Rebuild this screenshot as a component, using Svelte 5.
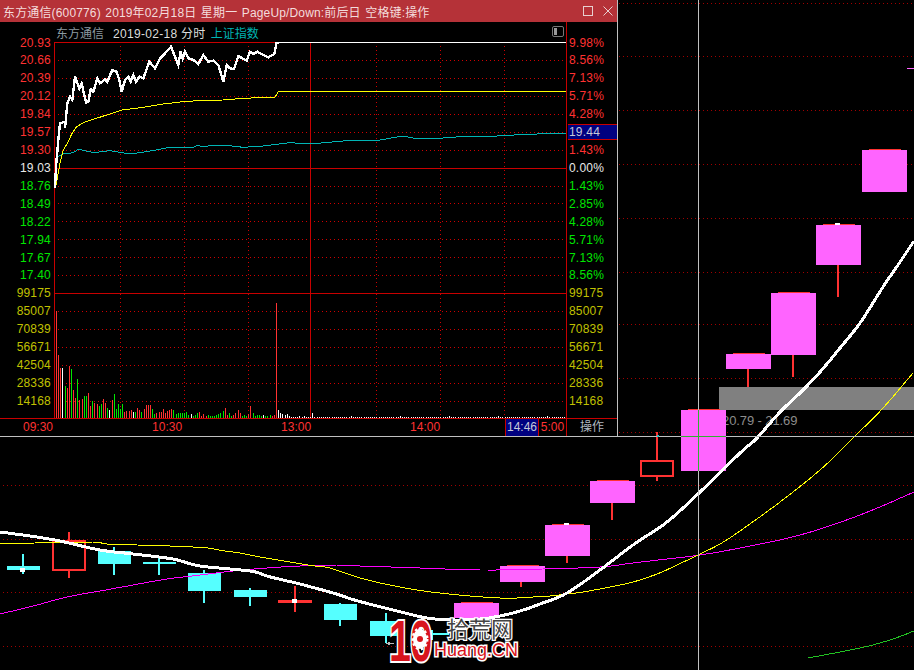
<script>
	// main K-line chart behind the window
	const bgGrid = [3, 56, 110, 164, 218, 272, 324, 378, 432, 485, 539, 592, 646];

	const candles = [
		{ k: "cyan", x: 7, y: 566, h: 4, cx: 22, top: 554, bot: 574, dot: 568 },
		{ k: "hollow", x: 52, y: 540, h: 31, cx: 68, top: 532, bot: 578 },
		{ k: "cyan", x: 98, y: 551, h: 13, cx: 113, top: 547, bot: 575 },
		{ k: "cyan", x: 143, y: 562, h: 2, cx: 158, top: 556, bot: 575 },
		{ k: "cyan", x: 188, y: 573, h: 18, cx: 203, top: 570, bot: 603 },
		{ k: "cyan", x: 234, y: 590, h: 7, cx: 249, top: 588, bot: 606 },
		{ k: "red", x: 278, y: 600, h: 3, cx: 294, top: 586, bot: 612, dot: 599 },
		{ k: "cyan", x: 324, y: 604, h: 16, cx: 339, top: 603, bot: 626 },
		{ k: "cyan", x: 370, y: 621, h: 15, cx: 385, top: 613, bot: 643 },
		{ k: "cyan", x: 416, y: 633, h: 2, cx: 431, top: 630, bot: 640 },
		{ k: "pink", x: 454, y: 603, h: 15, cx: 476, top: 603, bot: 618 },
		{ k: "pink", x: 500, y: 566, h: 16, cx: 520, top: 566, bot: 587 },
		{ k: "pink", x: 545, y: 525, h: 31, cx: 566, top: 525, bot: 563, dot: 523 },
		{ k: "pink", x: 590, y: 481, h: 22, cx: 611, top: 481, bot: 520 },
		{ k: "hollow", x: 640, y: 460, h: 17, cx: 656, top: 432, bot: 481 },
		{ k: "pink", x: 681, y: 410, h: 61, cx: 703, top: 410, bot: 471 },
		{ k: "pink", x: 726, y: 354, h: 15, cx: 747, top: 354, bot: 387 },
		{ k: "pink", x: 771, y: 293, h: 62, cx: 792, top: 293, bot: 377 },
		{ k: "pink", x: 816, y: 225, h: 40, cx: 837, top: 225, bot: 297, dot: 223 },
		{ k: "pink", x: 862, y: 150, h: 42, cx: 884, top: 150, bot: 192 },
	];

	// Catmull-Rom through the read-off points, the averages are smooth curves
	const smooth = (str) => {
		const p = str.split(" ").map((s) => s.split(",").map(Number));
		const out = [];
		for (let i = 0; i < p.length - 1; i++) {
			const a = p[Math.max(i - 1, 0)];
			const b = p[i];
			const c = p[i + 1];
			const d = p[Math.min(i + 2, p.length - 1)];
			for (let t = 0; t < 1; t += 0.125) {
				const f = (k) =>
					0.5 *
					(2 * b[k] +
						(c[k] - a[k]) * t +
						(2 * a[k] - 5 * b[k] + 4 * c[k] - d[k]) * t * t +
						(3 * b[k] - a[k] - 3 * c[k] + d[k]) * t * t * t);
				out.push(`${f(0).toFixed(1)},${f(1).toFixed(1)}`);
			}
		}
		out.push(p[p.length - 1].join(","));
		return out.join(" ");
	};

	const maWhite = smooth("0,532 30,536 60,541 100,550 133,554 173,559 200,566 250,571 267,576 283,580 300,584 333,593 358,601 393,610 427,618 455,620 480,619 500,616 520,611 540,604 567,593 600,570 633,545 667,522 700,492 740,453 757,438 780,412 800,393 820,372 840,348 860,323 883,287 900,262 914,241");
	const maYellow = smooth("0,544 35,543 92,542 107,544 137,545 170,546 193,547 208,548 225,551 240,553 260,557 290,562 315,566 330,568 360,578 390,585 417,590 440,593 470,596 500,598 517,598 533,597 550,596 567,594 583,592 610,587 633,582 657,574 677,565 700,554 720,544 740,531 780,502 820,470 853,438 883,408 913,373");
	const maPink = smooth("0,614 33,606 67,597 100,591 133,585 167,579 200,575 233,571 267,568 300,566 333,565 360,566 420,568 480,570 543,569 600,567 633,563 667,559 700,555 740,548 800,535 860,515 914,492");
	const maGreen = smooth("808,658 860,648 890,640 914,631");

	// intraday window
	const vSolid = 310;
	const vDots = [120, 184, 248, 376, 440, 504];
	const hDots = [60, 78, 96, 114, 132, 150, 186, 203, 221, 239, 257, 275, 311, 329, 347, 365, 383, 401];

	const priceRaw = [[75,475],[78,410],[85,330],[90,280],[105,275],[105,295],[112,220],[120,200],[127,210],[135,140],[148,175],[155,160],[168,218],[175,215],[182,178],[190,185],[202,145],[210,160],[225,148],[232,155],[247,120],[260,125],[268,150],[275,185],[285,150],[295,140],[302,155],[310,135],[318,155],[328,140],[340,145],[358,95],[375,115],[390,85],[405,70],[423,50],[445,105],[452,65],[458,85],[465,65],[475,85],[490,90],[505,102],[520,75],[535,95],[550,92],[565,105],[580,155],[590,105],[600,115],[612,117],[625,78],[650,92],[660,65],[672,72],[682,65],[700,75],[715,82],[733,72],[740,38],[750,36]];
	const avgRaw = [[78,465],[90,400],[100,360],[115,335],[125,312],[140,290],[160,278],[190,268],[230,255],[275,240],[340,232],[400,222],[460,215],[520,211],[580,210],[640,205],[735,201],[745,185],[780,184]];
	const idxRaw = [[78,382],[100,372],[130,368],[145,358],[165,362],[190,368],[240,362],[300,372],[350,365],[420,352],[490,352],[500,347],[520,349],[580,345],[640,352],[700,348],[780,338]];
	const toPts = (raw) => raw.map(([x, y]) => `${30 + x / 3},${30 + y / 3}`).join(" ");

	const pricePts = toPts(priceRaw) + " 566,42";
	const avgPts = toPts(avgRaw) + " 566,91";
	const idxPts = toPts(idxRaw) + " 310,144 343,141 377,140.5 403,136 413,138 443,138 470,136 497,136 523,134.5 566,133";

	const volTop = [["r",107],["r",63],["r",50],["w",50],["g",32],["r",30],["r",52],["g",49],["r",28],["r",20],["g",39],["r",18],["r",19],["g",22],["g",22],["r",25],["r",12],["g",17],["r",15],["r",14],["g",12],["g",14],["r",19],["r",15],["g",10],["w",8],["r",18],["g",24],["g",9],["g",14],["g",9],["g",14],["r",6],["r",7],["r",7],["r",8],["w",6],["g",6],["r",10],["r",8],["g",6],["r",9],["r",13],["r",13],["r",13],["g",9],["g",4],["r",5],["r",6],["r",6],["r",9],["r",5],["r",7],["r",8],["r",9],["g",8],["g",4],["g",5],["g",5],["g",5],["g",5],["g",6],["g",3],["w",4],["g",2],["g",3],["g",5],["r",6],["r",2],["r",4],["r",2],["g",3],["g",2],["g",2],["g",2],["g",3],["g",4],["g",5],["g",7],["r",10],["r",3],["g",5],["g",2],["r",3],["r",5],["r",8],["r",5],["g",2],["g",3],["g",2],["r",4],["r",12],["g",5],["g",2],["g",3],["g",3],["g",2],["w",3],["g",2],["g",2],["g",3],["r",2],["r",3],["r",115],["w",8],["w",5],["w",4],["w",3],["w",4],["w",2],["w",1],["w",1],["w",1],["w",1],["w",2],["w",1],["w",2],["w",1]];
	const step = (276 - 56) / 103;
	const bars = [];
	for (let i = 0; i < 240; i++) {
		const v = volTop[i] || ["w", i === 120 ? 5 : i % 23 === 0 ? 2 : 1];
		bars.push({ x: Math.round(56 + i * step), h: v[1], c: v[0] });
	}
	const barColor = { r: "#ff3232", g: "#00e600", w: "#ffffff" };

	const leftRows = [
		["20.93", "up"], ["20.66", "up"], ["20.39", "up"], ["20.12", "up"], ["19.84", "up"], ["19.57", "up"], ["19.30", "up"],
		["19.03", "flat"],
		["18.76", "down"], ["18.49", "down"], ["18.22", "down"], ["17.94", "down"], ["17.67", "down"], ["17.40", "down"],
		["99175", "vol"], ["85007", "vol"], ["70839", "vol"], ["56671", "vol"], ["42504", "vol"], ["28336", "vol"], ["14168", "vol"],
	];
	const rightRows = [
		["9.98%", "up"], ["8.56%", "up"], ["7.13%", "up"], ["5.71%", "up"], ["4.28%", "up"],
		["19.44", "cur"],
		["1.43%", "up"], ["0.00%", "flat"],
		["1.43%", "down"], ["2.85%", "down"], ["4.28%", "down"], ["5.71%", "down"], ["7.13%", "down"], ["8.56%", "down"],
		["99175", "vol"], ["85007", "vol"], ["70839", "vol"], ["56671", "vol"], ["42504", "vol"], ["28336", "vol"], ["14168", "vol"],
	];
</script>

<div class="desk">
	<span class="range">20.79 - 21.69</span>

	<svg class="kline" width="914" height="670" viewBox="0 0 914 670">
		{#each bgGrid as y}
			<line x1="3" x2="914" y1={y + 0.5} y2={y + 0.5} class="bgdot" />
		{/each}

		<rect x="719" y="387" width="195" height="23" fill="#808080" />

		{#each candles as c}
			{#if c.k === "hollow"}
				<rect x={c.cx} y={c.top} width="2" height={c.bot - c.top} fill="#ff3232" />
				<rect x={c.x + 1} y={c.y + 1} width="32" height={c.h - 2} fill="#000" stroke="#ff3232" stroke-width="2" />
			{:else if c.k === "pink"}
				<rect x={c.cx} y={c.y} width="2" height={c.bot - c.y} fill="#ff3232" />
				<rect x={c.x + 7} y={c.y - 1} width="32" height="1" fill="#ff3232" />
				<rect x={c.x} y={c.y} width="45" height={c.h} fill="#ff64ff" />
			{:else if c.k === "red"}
				<rect x={c.cx} y={c.top} width="2" height={c.bot - c.top} fill="#ff3232" />
				<rect x={c.x} y={c.y} width="34" height={c.h} fill="#ff3232" />
			{:else}
				<rect x={c.cx} y={c.top} width="2" height={c.bot - c.top} fill="#55ffff" />
				<rect x={c.x} y={c.y} width="33" height={c.h} fill="#55ffff" />
			{/if}
			{#if c.dot}
				<rect x={c.cx - 2} y={c.dot} width="5" height={c.k === "pink" ? 2 : 4} fill="#fff" />
			{/if}
		{/each}
		<rect x="907" y="68" width="7" height="1" fill="#ff64ff" />

		<polyline points={maGreen} class="ma" stroke="#22c322" stroke-width="1" />
		<polyline points={maPink} class="ma" stroke="#ff00ff" stroke-width="1" />
		<polyline points={maYellow} class="ma" stroke="#ffff00" stroke-width="1" />
		<polyline points={maWhite} class="ma" stroke="#ffffff" stroke-width="3" />

		<line x1="618" x2="914" y1="436.5" y2="436.5" class="hair" />
		<line x1="698.5" x2="698.5" y1="0" y2="670" class="hair" />
		<rect x="681" y="436" width="45" height="1" fill="#30b030" />
		<rect x="698" y="410" width="1" height="61" fill="#30b030" />
		<rect x="657" y="435" width="2" height="2" fill="#30c0c0" />
		<polyline points="390,642 387,643.5 390,645 387,643.5 394,643.5" fill="none" stroke="#bbb" stroke-width="1" />
	</svg>

	<section class="win">
		<header class="title">
			<span>东方通信(600776) 2019年02月18日 星期一 PageUp/Down:前后日 空格键:操作</span>
			<div class="winbtns">
				<svg width="10" height="10" viewBox="0 0 10 10"><rect x="0.5" y="0.5" width="9" height="9" fill="none" stroke="#e8d0d0" /></svg>
				<svg width="10" height="10" viewBox="0 0 10 10"><path d="M0.5 0.5 9.5 9.5M9.5 0.5 0.5 9.5" fill="none" stroke="#e8d0d0" /></svg>
			</div>
		</header>

		<div class="main">
			<div class="axis left">
				{#each leftRows as [t, cls]}
					<div class="row {cls}">{t}</div>
				{/each}
			</div>

			<div class="center">
				<div class="heading">
					<span class="name">东方通信</span>
					<span class="date">2019-02-18 分时</span>
					<span class="index">上证指数</span>
					<svg class="toggle" width="12" height="11" viewBox="0 0 12 11">
						<rect x="0.5" y="0.5" width="11" height="10" rx="1.5" fill="none" stroke="#777" />
						<rect x="2" y="2" width="3" height="7" fill="#999" />
					</svg>
				</div>
				<svg class="plot" width="512" height="376" viewBox="54 42 512 376">
					{#each hDots as y}
						<line x1="54" x2="566" y1={y + 0.5} y2={y + 0.5} class="dot" />
					{/each}
					{#each vDots as x}
						<line x1={x + 0.5} x2={x + 0.5} y1="42" y2="418" class="dot" />
					{/each}
					<line x1="54" x2="566" y1="42.5" y2="42.5" class="solid" />
					<line x1="54" x2="566" y1="168.5" y2="168.5" class="solid" />
					<line x1="54" x2="566" y1="293.5" y2="293.5" class="solid" />
					<line x1="54.5" x2="54.5" y1="42" y2="418" class="solid" />
					<line x1={vSolid + 0.5} x2={vSolid + 0.5} y1="42" y2="418" class="solid" />

					{#each bars as b}
						<rect x={b.x} y={418 - b.h} width="1" height={b.h} fill={barColor[b.c]} />
					{/each}

					<polyline points={idxPts} class="ma" stroke="#00b4b4" stroke-width="1" />
					<polyline points={avgPts} class="ma" stroke="#ffff00" stroke-width="1" />
					<polyline points={pricePts} class="ma" stroke="#ffffff" stroke-width="2.4" />
				</svg>
			</div>

			<div class="axis right">
				{#each rightRows as [t, cls]}
					<div class="row {cls}">
						{#if cls === "cur"}<span class="curbox">{t}</span>{:else}{t}{/if}
					</div>
				{/each}
			</div>
		</div>

		<footer class="foot">
			<div class="times">
				<span>09:30</span>
				<span>10:30</span>
				<span>13:00</span>
				<span>14:00</span>
			</div>
			<span class="cursor-time">14:46</span>
			<span class="end-time">5:00</span>
			<span class="action">操作</span>
		</footer>
	</section>

	<div class="logo">
		<span class="ten">10</span>
		<svg class="gear" width="22" height="26" viewBox="0 0 22 26">
			<ellipse cx="11" cy="13" rx="7" ry="10" fill="#fff" stroke="#fff" stroke-width="3" stroke-dasharray="2.5 2.5" />
			<circle cx="11" cy="13" r="3" fill="#d8141c" />
		</svg>
		<span class="cn">拾荒网</span>
		<span class="en">Huang.CN</span>
	</div>
</div>

<style>
	:global(body) {
		margin: 0;
		background: #000;
	}
	.desk {
		position: relative;
		width: 914px;
		height: 670px;
		background: #000;
		overflow: hidden;
		font-family: "Liberation Sans", "Noto Sans CJK SC", sans-serif;
		font-size: 12px;
	}
	svg {
		display: block;
	}
	.kline {
		position: absolute;
		left: 0;
		top: 0;
		shape-rendering: crispEdges;
	}
	.bgdot {
		stroke: #a00000;
		stroke-width: 1;
		stroke-dasharray: 1 3;
	}
	.ma {
		fill: none;
	}
	.hair {
		stroke: #c0c0c0;
		stroke-width: 1;
	}
	.range {
		position: absolute;
		left: 722px;
		top: 413px;
		color: #8c8c8c;
		font-size: 13px;
		line-height: 15px;
		letter-spacing: -0.1px;
	}

	.win {
		position: absolute;
		left: 0;
		top: 0;
		width: 618px;
		height: 437px;
		box-sizing: border-box;
		background: #000;
		border-right: 1px solid #c0c0c0;
		border-bottom: 1px solid #c0c0c0;
		display: flex;
		flex-direction: column;
	}
	.title {
		height: 22px;
		flex: none;
		background: #b53238;
		color: #f4dcdc;
		display: flex;
		align-items: center;
		justify-content: space-between;
		padding: 0 4px 0 3px;
		white-space: nowrap;
		letter-spacing: 0.15px;
		word-spacing: 1px;
	}
	.winbtns {
		display: flex;
		gap: 10px;
	}
	.main {
		display: flex;
		height: 396px;
		flex: none;
	}
	.axis {
		padding-top: 12.5px;
		box-sizing: border-box;
		letter-spacing: 0.2px;
	}
	.axis.left {
		width: 54px;
		text-align: right;
		padding-right: 3px;
	}
	.axis.right {
		width: 50px;
		padding-left: 2px;
	}
	.row {
		height: 17.93px;
		line-height: 17.93px;
	}
	.up {
		color: #ff3232;
	}
	.flat {
		color: #e8e8e8;
	}
	.down {
		color: #00e600;
	}
	.vol {
		color: #c0c000;
	}
	.curbox {
		display: block;
		margin-left: -1px;
		height: 14px;
		line-height: 14px;
		padding-left: 1px;
		background: #000080;
		color: #c8c8d8;
		border-top: 1px solid #c80000;
		border-bottom: 1px solid #c80000;
	}
	.center {
		width: 513px;
		box-sizing: border-box;
		border-right: 1px solid #c80000;
	}
	.heading {
		position: relative;
		height: 20px;
		display: flex;
		align-items: center;
		padding-left: 2px;
		gap: 9px;
		white-space: nowrap;
	}
	.name {
		color: #8c9aa0;
	}
	.date {
		color: #dcdcdc;
		margin-right: -4px;
		letter-spacing: 0.3px;
	}
	.index {
		color: #00b4b4;
	}
	.toggle {
		position: absolute;
		right: 2px;
		top: 4px;
	}
	.plot {
		shape-rendering: crispEdges;
	}
	.dot {
		stroke: #d00000;
		stroke-width: 1;
		stroke-dasharray: 1 3;
	}
	.solid {
		stroke: #c80000;
		stroke-width: 1;
	}

	.foot {
		height: 18px;
		flex: none;
		box-sizing: border-box;
		border-top: 1px solid #c80000;
		display: flex;
		line-height: 17px;
		color: #ff3232;
	}
	.times {
		width: 505px;
		box-sizing: border-box;
		padding-left: 23px;
		display: flex;
		gap: 99px;
	}
	.cursor-time {
		width: 34px;
		box-sizing: border-box;
		background: #000080;
		color: #c8c8d8;
		text-align: center;
		border-left: 1px solid #c80000;
		border-right: 1px solid #c80000;
	}
	.end-time {
		width: 28px;
		box-sizing: border-box;
		text-align: center;
		border-right: 1px solid #c80000;
	}
	.action {
		flex: 1;
		text-align: center;
		color: #b0b8c0;
	}

	.logo {
		position: absolute;
		left: 388px;
		top: 616px;
		width: 132px;
		height: 50px;
	}
	.ten {
		position: absolute;
		left: 1px;
		top: -4px;
		font-size: 58px;
		line-height: 58px;
		font-weight: bold;
		letter-spacing: -1px;
		color: #d8141c;
		-webkit-text-stroke: 4px #fff;
		paint-order: stroke fill;
		transform: scaleX(0.68);
		transform-origin: left top;
	}
	.gear {
		position: absolute;
		left: 21px;
		top: 10px;
	}
	.cn {
		position: absolute;
		left: 59px;
		top: 2px;
		font-size: 22px;
		line-height: 24px;
		color: #444;
		-webkit-text-stroke: 2.5px #fff;
		paint-order: stroke fill;
	}
	.en {
		position: absolute;
		left: 46px;
		top: 22px;
		font-size: 18px;
		line-height: 24px;
		color: #d8141c;
		-webkit-text-stroke: 3px #fff;
		paint-order: stroke fill;
		white-space: nowrap;
	}
</style>
